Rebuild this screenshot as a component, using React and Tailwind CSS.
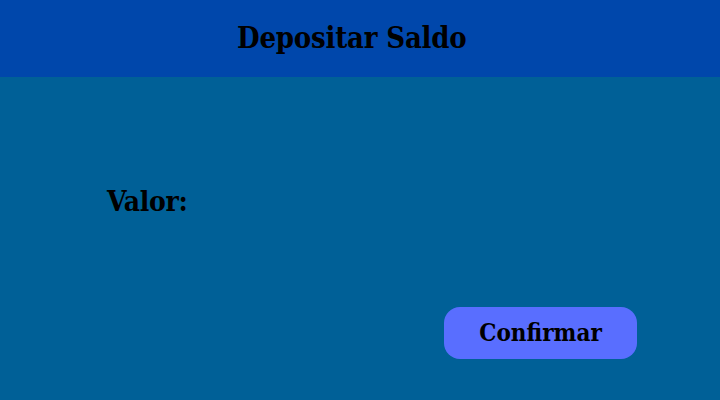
export default function App() {
  return (
    <div className="w-[720px] h-[400px] flex flex-col bg-[#006097] text-black" style={{ fontFamily: '"DejaVu Serif Condensed", "DejaVu Serif", serif' }}>
      <header className="h-[77px] bg-[#0047AB] flex items-center pl-[237px]">
        <h1 className="text-[29px] font-bold tracking-[-0.2px]">Depositar Saldo</h1>
      </header>
      <main className="flex-1 flex flex-col">
        <div className="pl-[107px] pt-[104px]">
          <label className="text-[28px] font-bold tracking-[-0.3px]">Valor:</label>
        </div>
        <div className="pl-[444px] pt-[84px]">
          <button className="w-[193px] h-[52px] rounded-[16px] bg-[#596EFF] text-[24px] font-bold">Confirmar</button>
        </div>
      </main>
    </div>
  );
}
